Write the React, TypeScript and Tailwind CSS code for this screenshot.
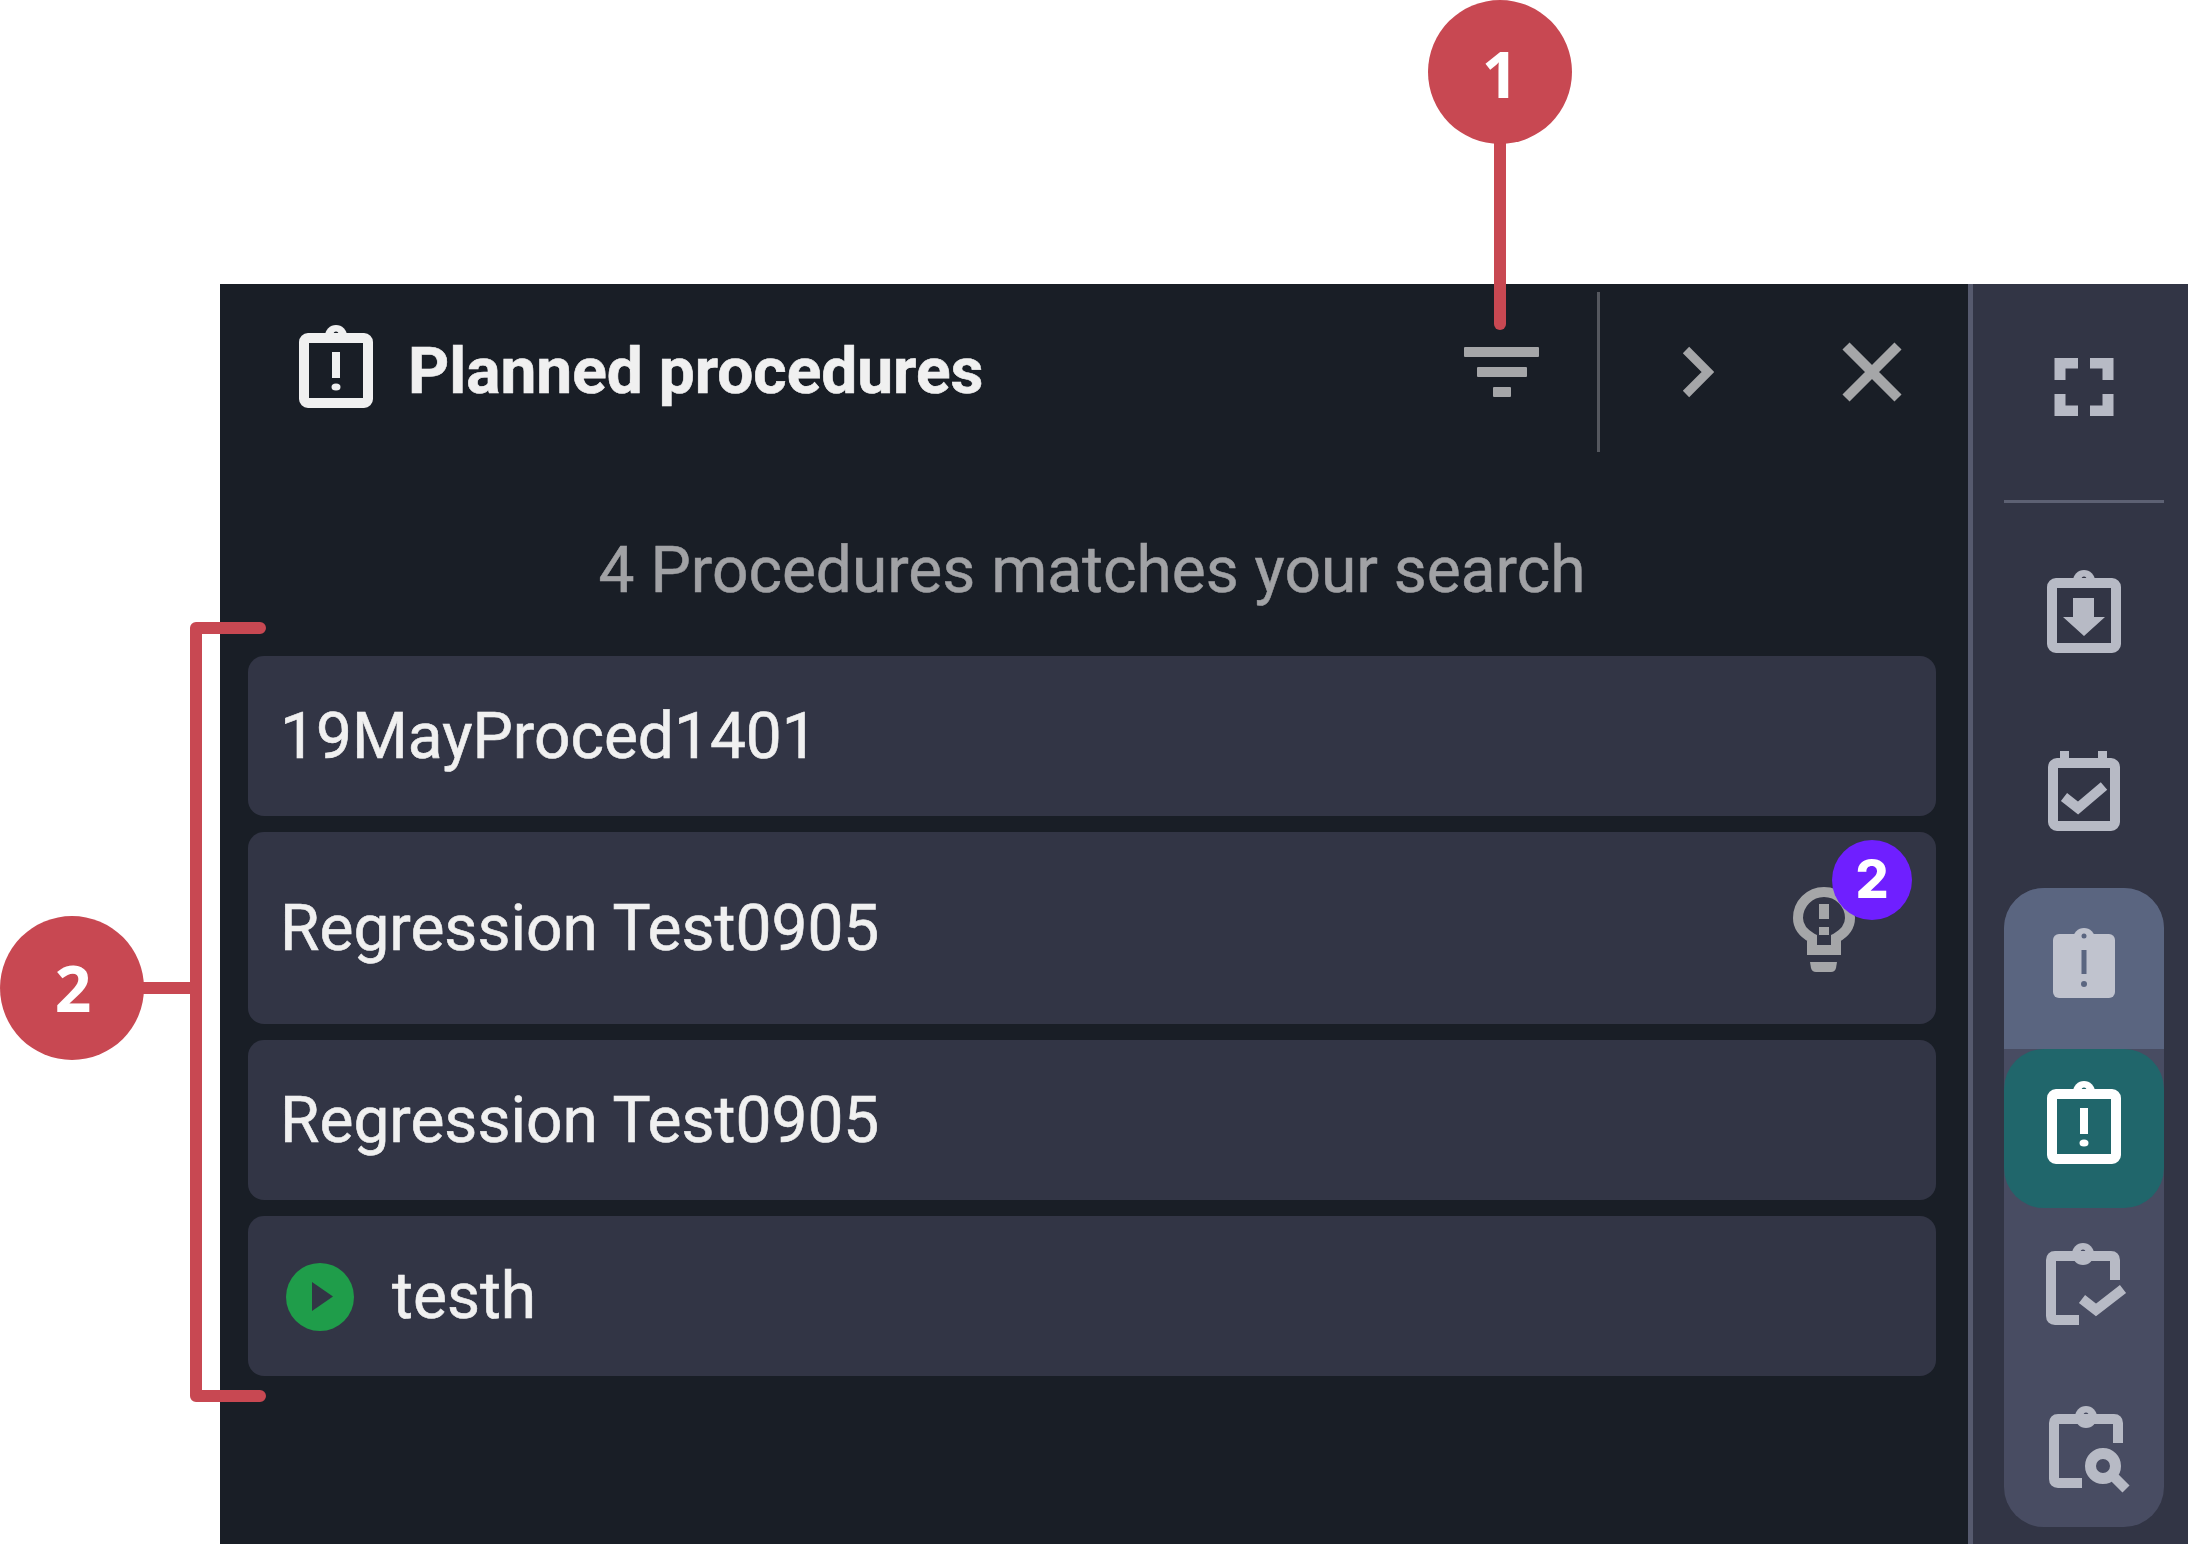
function ClipboardShape({ stroke, hole }: { stroke: string; hole: string }) {
  return (
    <>
      <circle cx="37" cy="11" r="11" fill={stroke} />
      <circle cx="37" cy="9" r="2.5" fill={hole} />
      <rect x="5" y="13" width="64" height="65" rx="4" fill={hole} stroke={stroke} strokeWidth="10" />
    </>
  );
}

function AlertClipboard({ color, bg, className }: { color: string; bg: string; className: string }) {
  return (
    <svg viewBox="0 0 74 83" className={className}>
      <ClipboardShape stroke={color} hole={bg} />
      <rect x="33" y="27" width="8" height="26" fill={color} />
      <ellipse cx="37" cy="62" rx="4.5" ry="3.5" fill={color} />
    </svg>
  );
}

function PartialClipboard({ children, className }: { children: React.ReactNode; className: string }) {
  return (
    <svg viewBox="0 0 82 88" fill="none" className={className}>
      <circle cx="37" cy="11" r="11" fill="#b7bac5" />
      <circle cx="37" cy="9" r="2.5" fill="#484c62" />
      <path d="M33 77H9q-4 0-4-4V17q0-4 4-4h56q4 0 4 4v20" stroke="#b7bac5" strokeWidth="10" />
      {children}
    </svg>
  );
}

export default function App() {
  const rowText = "text-[64px] leading-none text-[#f0f0f0] [-webkit-text-stroke:0.6px_#f0f0f0]";
  const row = "flex items-center rounded-[16px] bg-[#323545] pl-[32px] pt-[1px]";

  return (
    <div className="relative flex h-[1544px] w-[2188px] overflow-hidden bg-white pl-[220px] pt-[284px] font-['Roboto',sans-serif]">
      {/* Main panel */}
      <div className="flex w-[1748px] flex-col bg-[#191e26]">
        <div className="flex h-[176px] items-center pl-[79px]">
          <AlertClipboard color="#f0f0f0" bg="#191e26" className="mb-[12px] h-[83px] w-[74px]" />
          <h1 className="ml-[35px] text-[64px] font-bold leading-none text-[#f0f0f0] [-webkit-text-stroke:0.6px_#f0f0f0]">
            Planned procedures
          </h1>
          <div className="ml-auto flex items-center">
            <svg viewBox="0 0 75 50" className="h-[50px] w-[75px]">
              <rect x="0" y="0" width="75" height="10" rx="1" fill="#a5a6a8" />
              <rect x="13" y="20" width="50" height="10" rx="1" fill="#a5a6a8" />
              <rect x="29" y="40" width="18" height="10" rx="1" fill="#a5a6a8" />
            </svg>
            <div className="ml-[58px] h-[160px] w-[3px] bg-[#55585f]" />
            <svg viewBox="0 0 32 52" fill="none" className="ml-[82px] h-[52px] w-[32px]">
              <path d="M4 4l22 22L4 48" stroke="#a5a6a8" strokeWidth="9" />
            </svg>
            <svg viewBox="0 0 60 60" fill="none" className="ml-[128px] mr-[66px] h-[60px] w-[60px]">
              <path d="M4 4l52 52M56 4L4 56" stroke="#a5a6a8" strokeWidth="10" />
            </svg>
          </div>
        </div>

        <p className="mt-[73px] h-[76px] w-[1744px] text-center text-[64px] leading-[76px] text-[#a1a2a5] [-webkit-text-stroke:0.5px_#a1a2a5]">
          4 Procedures matches your search
        </p>

        <div className="ml-[28px] mt-[47px] flex w-[1688px] flex-col gap-[16px]">
          <div className={`${row} h-[160px]`}>
            <span className={rowText}>19MayProced1401</span>
          </div>
          <div className={`${row} relative h-[192px]`}>
            <span className={rowText}>Regression Test0905</span>
            <svg viewBox="0 0 62 85" fill="none" className="ml-auto mr-[81px] mt-[2px] h-[85px] w-[62px]">
              <path
                d="M19 63V51C10 46 5 39 5 31a26 26 0 0 1 52 0c0 8-5 15-14 20v12z"
                stroke="#a5a6a8"
                strokeWidth="10"
              />
              <rect x="26" y="17" width="10" height="15" fill="#a5a6a8" />
              <rect x="26" y="40" width="10" height="8" fill="#a5a6a8" />
              <path d="M17 75h27l-1 6q-1 4-5 4H23q-4 0-5-4z" fill="#a5a6a8" />
            </svg>
            <span className="absolute left-[1584px] top-[8px] flex h-[80px] w-[80px] items-center justify-center rounded-full bg-[#6f1fff] font-['Inter',sans-serif] text-[52px] font-extrabold text-white">
              2
            </span>
          </div>
          <div className={`${row} h-[160px]`}>
            <span className={rowText}>Regression Test0905</span>
          </div>
          <div className={`${row} h-[160px] pl-[38px]`}>
            <span className="flex h-[68px] w-[68px] items-center justify-center rounded-full bg-[#1f9d4a]">
              <svg viewBox="0 0 21 29" className="ml-[4px] h-[29px] w-[21px]">
                <path d="M0 0l21 14.5L0 29z" fill="#323545" />
              </svg>
            </span>
            <span className={`${rowText} ml-[38px]`}>testh</span>
          </div>
        </div>
      </div>

      {/* Right toolbar */}
      <div className="flex flex-1 flex-col items-center border-l-[5px] border-[#565a6e] bg-[#323545] pl-[7px] pt-[74px]">
        <svg viewBox="0 0 60 58" fill="none" className="h-[58px] w-[60px]">
          <path
            d="M24 5H6v17M36 5h18v17M6 36v17h18M54 36v17H36"
            stroke="#b7bac5"
            strokeWidth="11"
          />
        </svg>
        <div className="mt-[84px] h-[3px] w-[160px] bg-[#5d6173]" />
        <svg viewBox="0 0 74 83" className="mt-[67px] h-[83px] w-[74px]">
          <ClipboardShape stroke="#b7bac5" hole="#323545" />
          <path d="M26 28h21v19h11L37 66 16 47h10z" fill="#b7bac5" />
        </svg>
        <svg viewBox="0 0 72 80" fill="none" className="mt-[98px] h-[80px] w-[72px]">
          <rect x="12" y="0" width="9" height="14" fill="#b7bac5" />
          <rect x="50" y="0" width="9" height="14" fill="#b7bac5" />
          <rect x="5" y="12" width="62" height="63" rx="4" stroke="#b7bac5" strokeWidth="10" />
          <path d="M16 46l14 11 26-22" stroke="#b7bac5" strokeWidth="10" />
        </svg>

        <div className="mt-[57px] flex h-[639px] w-[160px] flex-col items-center rounded-[40px] bg-[#484c62]">
          <div className="flex h-[161px] w-full items-center justify-center rounded-t-[40px] bg-[#5a6580]">
            <svg viewBox="0 0 62 70" className="mb-[12px] h-[70px] w-[62px]">
              <circle cx="31" cy="11" r="11" fill="#c0c3ce" />
              <rect x="0" y="6" width="62" height="64" rx="6" fill="#c0c3ce" />
              <circle cx="31" cy="8" r="2.5" fill="#5a6580" />
              <rect x="28.5" y="22" width="5" height="24" fill="#5a6580" />
              <circle cx="31" cy="56" r="3" fill="#5a6580" />
            </svg>
          </div>
          <div className="flex h-[159px] w-full items-center justify-center rounded-[40px] bg-[#20666b]">
            <AlertClipboard color="#ffffff" bg="#20666b" className="mb-[12px] h-[83px] w-[74px]" />
          </div>
          <PartialClipboard className="mt-[35px] h-[88px] w-[82px] translate-x-[3px]">
            <path d="M36 56l14 11 27-21" stroke="#b7bac5" strokeWidth="10" />
          </PartialClipboard>
          <PartialClipboard className="mt-[75px] h-[88px] w-[82px] translate-x-[6px]">
            <circle cx="54" cy="60" r="12.5" stroke="#b7bac5" strokeWidth="11" />
            <path d="M66 72l11 11" stroke="#b7bac5" strokeWidth="10" />
          </PartialClipboard>
        </div>
      </div>

      {/* Callout 1 */}
      <div className="absolute left-[1494px] top-[100px] h-[230px] w-[12px] rounded-b-full bg-[#c84852]" />
      <div className="absolute left-[1428px] top-0 flex h-[144px] w-[144px] items-center justify-center rounded-full bg-[#c84852] pt-[4px] font-['Open_Sans',sans-serif] text-[64px] font-bold text-white">
        1
      </div>

      {/* Callout 2 */}
      <svg viewBox="0 0 136 792" fill="none" className="absolute left-[136px] top-[616px] h-[792px] w-[136px]">
        <path d="M124 12H60v768h64M0 372h60" stroke="#c84852" strokeWidth="12" strokeLinecap="round" strokeLinejoin="round" />
      </svg>
      <div className="absolute left-0 top-[916px] flex h-[144px] w-[144px] items-center justify-center rounded-full bg-[#c84852] pl-[2px] font-['Open_Sans',sans-serif] text-[64px] font-bold text-white">
        2
      </div>
    </div>
  );
}
